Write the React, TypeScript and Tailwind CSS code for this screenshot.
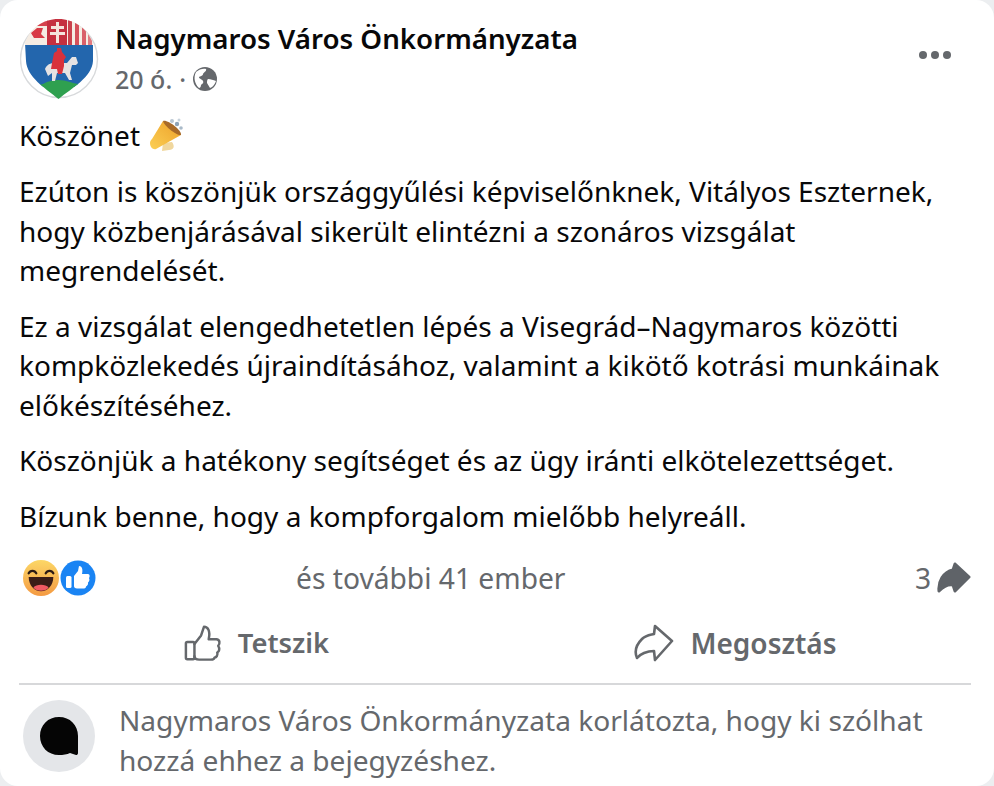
import React from "react";

const font = { fontFamily: '"Noto Sans", "Open Sans", sans-serif' };

function Crest() {
  return (
    <svg width="80" height="80" viewBox="0 0 80 80" className="shrink-0">
      <defs>
        <clipPath id="sh">
          <path d="M38.5 0 C54 0 67 9 73 24 L73 42 C72 58 52 69 38.5 80 C25 69 7 58 6 42 L5 24 C10 9 23 0 38.5 0 Z" />
        </clipPath>
      </defs>
      <circle cx="39" cy="40" r="38.5" fill="#fff" stroke="#d8dadc" strokeWidth="1.4" />
      <g clipPath="url(#sh)">
        <rect x="0" y="0" width="80" height="27" fill="#f5ece3" />
        <rect x="8" y="0" width="20" height="7" fill="#d5424c" />
        <path d="M11 14 L17 9 L23 9 L21 15 L25 19 L14 19 Z" fill="#d83a45" />
        <rect x="27" y="0" width="20" height="26" fill="#c5303f" />
        <rect x="48" y="0" width="4" height="26" fill="#c9414c" />
        <rect x="55" y="0" width="4" height="26" fill="#d5505a" />
        <rect x="62" y="0" width="4" height="26" fill="#d9606a" />
        <rect x="68" y="0" width="4" height="26" fill="#e07a80" />
        <path d="M36 3 h3 v4 h5 v3 h-5 v3 h6 v3 h-6 v8 h-3 v-8 h-6 v-3 h6 v-3 h-5 v-3 h5 Z" fill="#f4e4dc" />
        <rect x="0" y="26" width="80" height="42" fill="#2366ad" />
        <path d="M0 67 Q20 68 27 63 Q38 59 50 63 Q60 67 80 64 V80 H0 Z" fill="#2fa04f" />
        <path d="M25 50 C27 45 32 43 38 44 L47 44 L52 38 L56 38 L58 44 L56 46 L52 46 L50 54 L52 61 L49 61 L45 54 L37 54 L35 62 L32 62 L32 54 L28 57 Z" fill="#e6e3e3" />
        <path d="M32 44 L34 34 L37 32 L37 29 L41 29 L42 33 L46 38 L44 41 L44 47 L42 55 L38 55 L37 50 L31 50 Z" fill="#d8323c" />
      </g>
    </svg>
  );
}

function Globe() {
  return (
    <svg width="24" height="24" viewBox="0 0 24 24">
      <circle cx="12" cy="12" r="12" fill="#65686c" />
      <path d="M3 5 C6 2 11 1 13 2 C14 4 11 5 10 7 C10 9 7 9 6 10 C6 12 9 12 10 14 C11 16 9 17 8 18 C8 20 7 21 6 21 C2 17 0 11 3 5 Z" fill="#fff" />
      <path d="M15 12 C18 12 20 13 23 14 C22 17 20 20 17 21 C16 19 15 18 14 16 C14 14 14 13 15 12 Z" fill="#fff" />
    </svg>
  );
}

function Megaphone() {
  return (
    <svg width="36" height="36" viewBox="0 0 36 36">
      <defs>
        <linearGradient id="meg" x1="0" y1="1" x2="1" y2="0">
          <stop offset="0" stopColor="#fbcf55" />
          <stop offset="1" stopColor="#eda028" />
        </linearGradient>
      </defs>
      <path d="M14 25 L23 24 C26 28 25 32 20 32 L13 33 Z" fill="#f0d79e" />
      <path d="M1 25 C1 23 2 22 3 21 L14 3 L32 17 L7 31 C4 32 1 29 1 25 Z" fill="url(#meg)" />
      <path d="M14 3 C18 1 33 12 32 17 C28 18 15 8 14 3 Z" fill="#a86a28" />
      <circle cx="23" cy="3" r="2" fill="#b9c6d2" />
      <circle cx="28" cy="6" r="2.2" fill="#8ea3b8" />
      <circle cx="30" cy="2" r="1.5" fill="#c7d2dc" />
      <circle cx="32" cy="10" r="1.8" fill="#a9bac9" />
    </svg>
  );
}

function HahaEmoji() {
  return (
    <svg width="36" height="36" viewBox="0 0 38 38" className="relative z-10">
      <defs>
        <linearGradient id="haha" x1="0" y1="0" x2="0" y2="1">
          <stop offset="0" stopColor="#fcd766" />
          <stop offset="1" stopColor="#f49a42" />
        </linearGradient>
      </defs>
      <circle cx="19" cy="19" r="19" fill="url(#haha)" />
      <path d="M6 14 a4.5 4.5 0 0 1 8 0" fill="none" stroke="#2b1a14" strokeWidth="2.4" strokeLinecap="round" />
      <path d="M24 14 a4.5 4.5 0 0 1 8 0" fill="none" stroke="#2b1a14" strokeWidth="2.4" strokeLinecap="round" />
      <path d="M6 18 H32 C32 27 26 33 19 33 C12 33 6 27 6 18 Z" fill="#3a1d17" />
      <path d="M11 29 C14 25 24 25 27 29 C24 33.5 14 33.5 11 29 Z" fill="#ef5a63" />
    </svg>
  );
}

function LikeBadge() {
  return (
    <svg width="36" height="36" viewBox="0 0 36 36" className="ml-[1px]">
      <circle cx="18" cy="18" r="17.5" fill="#1a84f3" />
      <rect x="6" y="16" width="5.5" height="12" rx="1.5" fill="#fff" />
      <path d="M14 16 L18 11 L19 6 C22 6 23 9 22 14 H28 C30 14 30 17 29 18 C30 20 29 22 28 22.5 C28.5 24.5 27 26 26 26.5 C26 28 25 28.5 23 28.5 H17 C15 28.5 14 27.5 14 26 Z" fill="#fff" />
    </svg>
  );
}

function ThumbOutline() {
  return (
    <svg width="38" height="38" viewBox="0 0 40 40" fill="none" stroke="#65686c" strokeWidth="2.6" strokeLinejoin="round" strokeLinecap="round">
      <rect x="2" y="19" width="9" height="18" rx="1.5" />
      <path d="M11 21 L18 12 L21 3 C25 3 28 7 26 16 H34 C38 16 38 21 36 23 C38 26 37 29 35 30 C36 33 34 35 32 35.5 C32 37 30 37.5 28 37.5 H16 C13 37.5 11 36 11 34" />
    </svg>
  );
}

function ShareOutline() {
  return (
    <svg width="40" height="38" viewBox="0 0 40 38" fill="none" stroke="#65686c" strokeWidth="2.6" strokeLinejoin="round" strokeLinecap="round">
      <path d="M21 2 L38 17 L21 36 L20 27 C13 27 6 30 3 34 C0 27 3 20 8 15 C12 11 16 11 20 10 Z" />
    </svg>
  );
}

function ShareSolid() {
  return (
    <svg width="34" height="32" viewBox="0 0 34 32">
      <path d="M18 2 L32 15 L18 29 L16 23 C11 22 6 25 2 29 C1 20 6 10 16 8 Z" fill="#5f6368" stroke="#5f6368" strokeWidth="3" strokeLinejoin="round" />
    </svg>
  );
}

export default function App() {
  return (
    <div className="w-[994px] h-[786px] bg-[#eceef0] overflow-hidden" style={font}>
      <div className="w-[994px] h-[786px] bg-white rounded-[18px] overflow-hidden pl-[19px] pr-[23px] text-[#080809]">
        <div className="flex pt-[19px] h-[101px]">
          <span className="ml-[1px]"><Crest /></span>
          <div className="ml-[15px] flex-1">
            <div className="text-[27.7px] leading-[40px] font-semibold whitespace-nowrap -mt-[1px]">Nagymaros Város Önkormányzata</div>
            <div className="flex items-center text-[#65686c] text-[25px] font-medium leading-[40px] h-[40px] mt-[1px]">
              <span>20 ó.</span>
              <span className="mx-[7px]">·</span>
              <Globe />
            </div>
          </div>
          <div className="flex gap-[4px] mt-[32px] mr-[20px] h-[8px]">
            <span className="w-[8px] h-[8px] rounded-full bg-[#65686c]" />
            <span className="w-[8px] h-[8px] rounded-full bg-[#65686c]" />
            <span className="w-[8px] h-[8px] rounded-full bg-[#65686c]" />
          </div>
        </div>
        <div className="text-[28px] leading-[39.5px] whitespace-nowrap">
          <div className="flex items-center h-[40px] mt-[15px]">
            <span>Köszönet</span>
            <span className="ml-[9px]"><Megaphone /></span>
          </div>
          <p className="mt-[16px]">
            Ezúton is köszönjük országgyűlési képviselőnknek, Vitályos Eszternek,<br />
            hogy közbenjárásával sikerült elintézni a szonáros vizsgálat<br />
            megrendelését.
          </p>
          <p className="mt-[16px]">
            Ez a vizsgálat elengedhetetlen lépés a Visegrád–Nagymaros közötti<br />
            kompközlekedés újraindításához, valamint a kikötő kotrási munkáinak<br />
            előkészítéséhez.
          </p>
          <p className="mt-[16px]">Köszönjük a hatékony segítséget és az ügy iránti elkötelezettséget.</p>
          <p className="mt-[16px]">Bízunk benne, hogy a kompforgalom mielőbb helyreáll.</p>
        </div>
        <div className="flex items-center h-[40px] mt-[22px] text-[#65686c] text-[28.2px]">
          <span className="ml-[4px] flex items-center"><HahaEmoji /><LikeBadge /></span>
          <span className="ml-[200px]">és további 41 ember</span>
          <span className="ml-auto mr-[6px]">3</span>
          <ShareSolid />
        </div>
        <div className="flex h-[87px] pt-[5px] items-center border-b-2 border-[#d7d8da] text-[#65686c] font-semibold">
          <div className="w-[475px] flex items-center justify-center gap-[16px] text-[27.4px]"><ThumbOutline /><span>Tetszik</span></div>
          <div className="flex-1 flex items-center justify-center gap-[16px] text-[28px] pl-[6px]"><ShareOutline /><span>Megosztás</span></div>
        </div>
        <div className="flex mt-[15px]">
          <div className="w-[72px] h-[72px] rounded-full bg-[#e4e6e9] ml-[4px] flex items-center justify-center shrink-0">
            <svg width="40" height="40" viewBox="0 0 40 40">
              <path d="M20 1 C31 1 39 9 39 20 V37 C39 38.5 38 39 37 39 L31 37 C28 38.5 24 39 20 39 C9 39 1 31 1 20 C1 9 9 1 20 1 Z" fill="#050505" />
            </svg>
          </div>
          <div className="ml-[24px] text-[#65686c] text-[28.1px] leading-[40px] whitespace-nowrap">
            Nagymaros Város Önkormányzata korlátozta, hogy ki szólhat<br />
            hozzá ehhez a bejegyzéshez.
          </div>
        </div>
      </div>
    </div>
  );
}
